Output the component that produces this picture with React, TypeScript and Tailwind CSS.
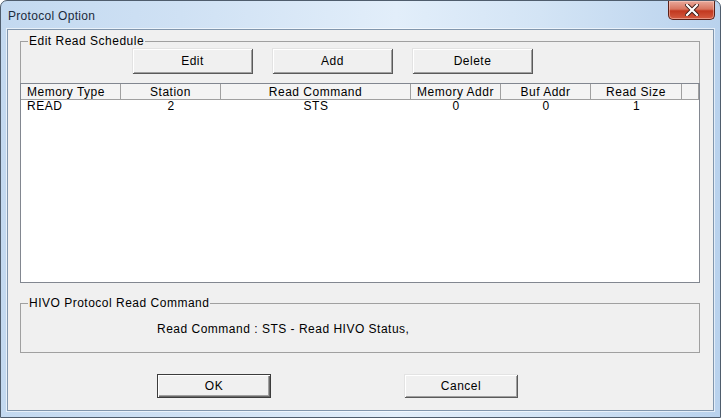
import React from 'react'

const columns = [
  { label: 'Memory Type', w: 'w-[100px]', align: 'justify-start pl-[6px]' },
  { label: 'Station', w: 'w-[100px]', align: 'justify-center' },
  { label: 'Read Command', w: 'w-[190px]', align: 'justify-center' },
  { label: 'Memory Addr', w: 'w-[90px]', align: 'justify-center' },
  { label: 'Buf Addr', w: 'w-[90px]', align: 'justify-center' },
  { label: 'Read Size', w: 'w-[91px]', align: 'justify-center' },
]

const rows = [['READ', '2', 'STS', '0', '0', '1']]

function WinButton({ label, w, h, isDefault }: { label: string; w: string; h: string; isDefault?: boolean }) {
  return (
    <button
      className={`${w} ${h} flex items-center justify-center bg-[#f0f0f0] tracking-[0.5px] ${
        isDefault
          ? 'border border-[#3c3c3c] shadow-[inset_1px_1px_0_#fff,inset_-1px_-1px_0_#696969,inset_-2px_-2px_0_#a0a0a0]'
          : 'shadow-[inset_1px_1px_0_#e3e3e3,inset_-1px_-1px_0_#5a5a5a,inset_2px_2px_0_#fff,inset_-2px_-2px_0_#a0a0a0]'
      }`}
    >
      {label}
    </button>
  )
}

function CloseButton() {
  return (
    <div className="w-[47px] h-[19px] rounded-b-[5px] border border-t-0 border-[#5b2017] bg-[linear-gradient(180deg,#e9a99b_0%,#d8755f_45%,#c2381f_55%,#d45c41_100%)] flex items-center justify-center shadow-[inset_0_0_0_1px_rgba(255,220,210,0.45)]">
      <svg width="14" height="12" viewBox="0 0 14 12">
        <path d="M2 1 L12 11 M12 1 L2 11" stroke="#3a1a15" strokeWidth="4" strokeLinecap="square" />
        <path d="M2 1 L12 11 M12 1 L2 11" stroke="#ffffff" strokeWidth="2.2" strokeLinecap="square" />
      </svg>
    </div>
  )
}

export default function App() {
  return (
    <div className="w-[721px] h-[418px] flex flex-col rounded-t-[7px] border border-[#4f5d6d] bg-[linear-gradient(90deg,#c3d9f0_0%,#cfe1f4_25%,#e2eefa_55%,#d3e4f5_75%,#b9d2ed_100%)] font-['Liberation_Sans',Arial,sans-serif] text-[12px] text-black overflow-hidden">
      {/* title bar */}
      <div className="h-[28px] flex items-start justify-between pl-[7px] pr-[5px]">
        <span className="mt-[8px] leading-[14px] text-[#1b2a3c] tracking-[0.3px]">Protocol Option</span>
        <CloseButton />
      </div>

      <div className="flex-1 flex px-[6px] pb-[6px]">
        <div className="flex-1 flex flex-col border border-[#8196ad] bg-[#f0f0f0] pl-[12px] pr-[13px] shadow-[0_0_0_1px_rgba(255,255,255,0.6)]">
          {/* Edit Read Schedule */}
          <fieldset className="mt-[4px] border border-[#a0a0a0] flex flex-col">
            <legend className="ml-[7px] px-[1px] leading-[14px] tracking-[0.5px]">Edit Read Schedule</legend>
            <div className="flex gap-[19px] pl-[111px]">
              <WinButton label="Edit" w="w-[121px]" h="h-[26px]" />
              <WinButton label="Add" w="w-[121px]" h="h-[26px]" />
              <WinButton label="Delete" w="w-[121px]" h="h-[26px]" />
            </div>
            <div className="mt-[9px] -mx-px -mb-px h-[200px] border border-[#828790] bg-white flex flex-col">
              <div className="h-[16px] flex border-b border-[#a0a0a0] bg-[#f4f4f4]">
                {columns.map((c) => (
                  <div key={c.label} className={`${c.w} flex items-center ${c.align} border-r border-[#a0a0a0] leading-[14px] tracking-[0.5px]`}>
                    {c.label}
                  </div>
                ))}
                <div className="flex-1 border-r border-[#a0a0a0]" />
              </div>
              {rows.map((r, i) => (
                <div key={i} className="h-[13px] flex leading-[13px] tracking-[0.5px]">
                  {r.map((v, j) => (
                    <div key={j} className={`${columns[j].w} flex ${columns[j].align}`}>
                      {v}
                    </div>
                  ))}
                </div>
              ))}
            </div>
          </fieldset>

          {/* HIVO Protocol Read Command */}
          <fieldset className="mt-[13px] h-[57px] border border-[#a0a0a0]">
            <legend className="ml-[7px] px-[1px] leading-[14px] tracking-[0.5px]">HIVO Protocol Read Command</legend>
            <div className="mt-[12px] pl-[136px] leading-[14px] tracking-[0.5px]">Read Command : STS - Read HIVO Status,</div>
          </fieldset>

          {/* dialog buttons */}
          <div className="mt-[21px] flex pl-[137px] gap-[133px]">
            <WinButton label="OK" w="w-[114px]" h="h-[24px]" isDefault />
            <WinButton label="Cancel" w="w-[114px]" h="h-[24px]" />
          </div>
        </div>
      </div>
    </div>
  )
}
